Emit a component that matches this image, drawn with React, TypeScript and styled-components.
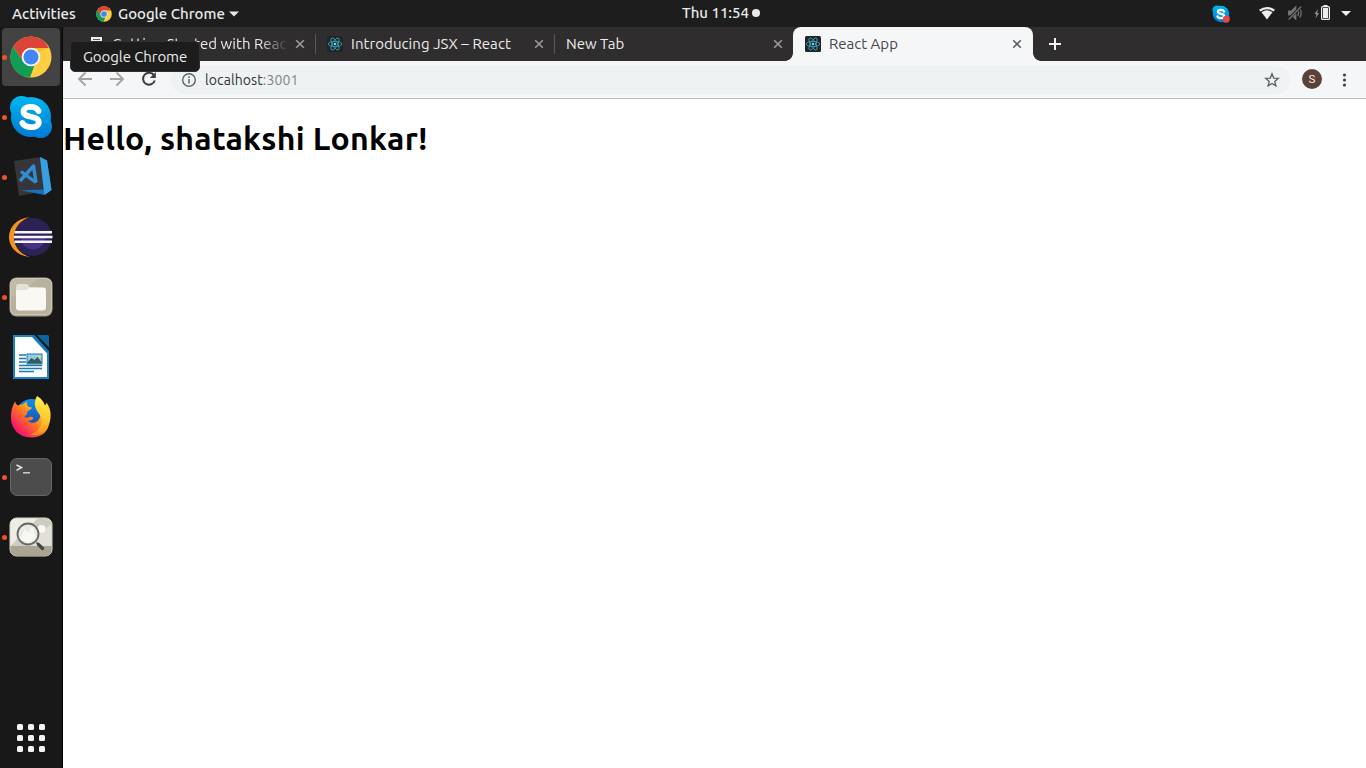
import React from 'react';
import styled, { createGlobalStyle } from 'styled-components';

const GlobalStyle = createGlobalStyle`
  * { box-sizing: border-box; }
  body { margin: 0; overflow: hidden; background: #fff; font-family: Ubuntu, "Noto Sans", sans-serif; }
  svg { display: block; flex: none; }
`;

const Desktop = styled.div`
  width: 1366px;
  height: 768px;
  display: flex;
  flex-direction: column;
`;

const Label = styled.span<{ $size?: number; $track?: number; $color?: string; $weight?: number }>`
  font-size: ${p => p.$size ?? 15}px;
  letter-spacing: ${p => p.$track ?? 0}px;
  color: ${p => p.$color ?? '#ececec'};
  font-weight: ${p => p.$weight ?? 400};
  white-space: nowrap;
  line-height: 20px;
`;

const TopBar = styled.header`
  height: 27px;
  flex: none;
  background: #1d1d1d;
  display: grid;
  grid-template-columns: 682px 1fr 154px;
  align-items: center;
`;

const TopLeft = styled.div`
  display: flex;
  align-items: center;
  padding-left: 12px;
`;

const Activities = styled.div`
  width: 84px;
  display: flex;
`;

const AppName = styled.div`
  display: flex;
  width: 111px;
  margin-left: 6px;
`;

const Clock = styled.div`
  display: flex;
  align-items: center;
  padding-bottom: 1px;
`;

const ClockText = styled.div`
  display: flex;
  width: 70px;
`;

const ClockDot = styled.i`
  width: 8px;
  height: 8px;
  border-radius: 50%;
  background: #e8e8e8;
`;

const Tray = styled.div`
  display: flex;
  align-items: center;
  height: 27px;
`;

const Body = styled.div`
  flex: 1;
  display: flex;
  min-height: 0;
`;

const Dock = styled.nav`
  width: 63px;
  background: #181818;
  border-right: 1px solid #040404;
  display: flex;
  flex-direction: column;
  gap: 2px;
  padding: 1px 0 0 2px;
`;

const DockItem = styled.div<{ $active?: boolean }>`
  width: 58px;
  height: 58px;
  border-radius: 4px;
  background: ${p => (p.$active ? '#434343' : 'transparent')};
  display: flex;
  align-items: center;
`;

const RunDot = styled.i<{ $on?: boolean }>`
  width: 5px;
  height: 5px;
  border-radius: 50%;
  background: ${p => (p.$on ? '#f05423' : 'transparent')};
  margin: 0 2px 0 0;
`;

const AppsButton = styled.div`
  margin: auto 0 16px 15px;
  display: grid;
  grid-template-columns: repeat(3, 6px);
  gap: 5px;
`;

const AppsDot = styled.i`
  height: 6px;
  border-radius: 1.5px;
  background: #f4f4f4;
`;

const Browser = styled.main`
  flex: 1;
  display: flex;
  flex-direction: column;
  background: #fff;
`;

const TabStrip = styled.div`
  height: 34px;
  background: #302d2e;
  display: flex;
  align-items: center;
`;

const Tab = styled.div<{ $width: number; $pad: number; $divider?: boolean }>`
  width: ${p => p.$width}px;
  height: 20px;
  padding: 0 10px 0 ${p => p.$pad}px;
  border-right: ${p => (p.$divider ? '1px solid #5a5758' : '0')};
  display: flex;
  align-items: center;
  gap: 8px;
`;

const ActiveTab = styled.div`
  position: relative;
  width: 240px;
  height: 34px;
  padding: 0 11px 0 12px;
  border-radius: 8px 8px 0 0;
  background: #f5f6f8;
  display: flex;
  align-items: center;
  gap: 8px;
  &::before, &::after {
    content: '';
    position: absolute;
    bottom: 0;
    width: 8px;
    height: 8px;
  }
  &::before { left: -8px; background: radial-gradient(circle at 0 0, transparent 7.5px, #f5f6f8 8.2px); }
  &::after { right: -8px; background: radial-gradient(circle at 100% 0, transparent 7.5px, #f5f6f8 8.2px); }
`;

const TabTitle = styled.div<{ $fade?: boolean }>`
  flex: 1;
  min-width: 0;
  display: flex;
  overflow: hidden;
  mask-image: ${p => (p.$fade ? 'linear-gradient(to right, #000 148px, transparent 176px)' : 'none')};
`;

const NewTab = styled.div`
  margin-left: 16px;
`;

const Toolbar = styled.div`
  height: 38px;
  background: #f5f6f8;
  border-bottom: 1px solid #bcc3cd;
  display: flex;
  align-items: center;
  padding: 0 14px 0 14px;
`;

const NavButtons = styled.div`
  display: flex;
  gap: 16px;
  padding-bottom: 1px;
`;

const Omnibox = styled.div`
  height: 28px;
  width: 1119px;
  margin-left: 14px;
  border-radius: 14px;
  background: #eef2f3;
  display: flex;
  align-items: center;
  padding: 0 10px 0 10px;
`;

const Url = styled.div`
  flex: 1;
  display: flex;
  margin-left: 8px;
`;

const Avatar = styled.div`
  width: 20px;
  height: 20px;
  margin: 0 0 1px 12px;
  border-radius: 50%;
  background: #5d4037;
  color: #eee;
  font: 11.5px/21px Roboto, sans-serif;
  text-align: center;
`;

const Menu = styled.div`
  margin-left: auto;
`;

const Heading = styled.h1`
  margin: 21px 0 0;
  font-size: 32px;
  line-height: 37px;
  letter-spacing: 0.27px;
  font-weight: 700;
  color: #000;
  white-space: nowrap;
`;

const Tooltip = styled.div`
  position: absolute;
  left: 70px;
  top: 41px;
  width: 130px;
  height: 31px;
  padding-left: 12px;
  border: 1px solid #303030;
  border-radius: 5px;
  background: #1c1c1c;
  display: flex;
  align-items: center;
`;

const ChromeLogo = ({ size }: { size: number }) => (
  <svg width={size} height={size} viewBox="0 0 42 42">
    <circle cx="21" cy="21" r="20.5" fill="#ffcd40" />
    <path d="M21 .5A20.500 20.500 0 0 1 38.800 12H21a9 9 0 0 0-7.800 13.500L3.200 10.800A20.500 20.500 0 0 1 21 .5Z" fill="#db4437" />
    <path d="M3.200 10.800 13.200 25.500A9 9 0 0 0 24.500 29.300L20 41.500A20.500 20.500 0 0 1 3.200 10.800Z" fill="#0f9d58" />
    <path d="M21 12h17.800l-10 4.500Z" fill="#e9b52b" opacity=".6" />
    <circle cx="21" cy="21" r="9.300" fill="#f4f4f4" />
    <circle cx="21" cy="21" r="7.500" fill="#4285f4" />
  </svg>
);

const SkypeLogo = ({ size, badge }: { size: number; badge?: boolean }) => (
  <svg width={size} height={size} viewBox="0 0 44 44">
    <defs>
      <linearGradient id="skype" gradientUnits="userSpaceOnUse" x1="0" y1="1" x2="0" y2="43">
        <stop offset="0" stopColor="#00b7f0" />
        <stop offset="1" stopColor="#0078d7" />
      </linearGradient>
    </defs>
    <g fill="url(#skype)">
      <circle cx="22" cy="22" r="20" />
      <circle cx="12.500" cy="12.500" r="11.500" />
      <circle cx="31.500" cy="31.500" r="11.500" />
    </g>
    <path d="M29.500 16C27 10.500 14.500 10.500 14.500 16.500 14.500 23.500 29.800 20 29.800 27.200c0 6.800-14 6-16.300.8" fill="none" stroke="#fff" strokeWidth="5.800" strokeLinecap="round" />
    {badge && <circle cx="35" cy="35" r="8.500" fill="#e8453c" />}
  </svg>
);

const CodeLogo = () => (
  <svg width="44" height="44" viewBox="0 0 44 44">
    <path d="m5 6 27-4 3 34-25 5Z" fill="#36363a" />
    <path d="m31 2 7 3.500 4.500 29.500-7 5-24-4.700 23-.8Z" fill="#1672b8" />
    <path d="m31 2 7 3.500 4.500 29.500-7 5Z" fill="#3a9fe0" />
    <path d="m12 16.500 15 11M11 26l13.500-15 2.500 16.500" fill="none" stroke="#2e8ed1" strokeWidth="3.400" strokeLinejoin="round" />
  </svg>
);

const EclipseLogo = () => (
  <svg width="44" height="44" viewBox="0 0 44 44">
    <path d="M21 2C-7 5-7 39 21 42 0 36 0 9 21 2Z" fill="#f7941e" />
    <circle cx="24" cy="22" r="19" fill="#2c2255" />
    <path d="M11.500 22a12.500 12.500 0 0 0 25 0Z" fill="#423389" />
    <path d="M5.500 17.300h37.500M5 22h38.500M5.500 26.700h37.500" stroke="#f6f5fa" strokeWidth="2.400" />
  </svg>
);

const FilesLogo = () => (
  <svg width="44" height="44" viewBox="0 0 44 44">
    <rect x=".5" y="2.500" width="43" height="39" rx="7" fill="#aaa593" />
    <rect x="1.500" y="3.500" width="41" height="36" rx="6" fill="#b7b19e" stroke="#cbc6b5" />
    <path d="M2 22C18 20 19 8 30 4h-22Q2 4 2 10Z" fill="#c0baa8" />
    <path d="M7 12q0-3 3-3h8l3 3.500h8v8H7Z" fill="#e5e1d7" />
    <path d="M7 16.500q0-1.500 2-1.500h9l3-2.500h13q3 0 3 3v17q0 3-3 3H10q-3 0-3-3Z" fill="#f9f8f5" />
  </svg>
);

const WriterLogo = () => (
  <svg width="44" height="44" viewBox="0 0 44 44">
    <path d="M5 1h18.500L39 18v25H5Z" fill="#fff" stroke="#1a83ca" strokeWidth="2" />
    <path d="M24 0h4.500L40 12.500V18Z" fill="#181818" />
    <path d="M22.500 0 40 19v-3L25.500 0Z" fill="#0f76bb" />
    <path d="M28 0h10.500q1.500 0 1.500 1.500V12.500Z" fill="#0d64a3" />
    <path d="M10 20h7M10 23.500h7M10 27h7M10 30.500h23M10 33.500h23M10 36.500h15" stroke="#1c79b5" strokeWidth="1.400" />
    <rect x="18" y="19" width="15" height="10" fill="#8fcdf0" stroke="#1c79b5" />
    <path d="m18.500 27 4-4 3 2 3-3 4 5v1.500h-14Z" fill="#375c52" />
    <circle cx="30.500" cy="21.500" r="1.300" fill="#f5e32b" />
  </svg>
);

const FirefoxLogo = () => (
  <svg width="44" height="44" viewBox="0 0 44 44">
    <defs>
      <linearGradient id="fox" x1=".9" y1=".1" x2=".15" y2=".8">
        <stop offset="0" stopColor="#fff44f" />
        <stop offset=".3" stopColor="#ffb81d" />
        <stop offset=".6" stopColor="#ff6a2a" />
        <stop offset="1" stopColor="#f5156c" />
      </linearGradient>
      <linearGradient id="globe" x1="0" y1="0" x2="0" y2="1">
        <stop offset="0" stopColor="#0a90f0" />
        <stop offset="1" stopColor="#283c9b" />
      </linearGradient>
      <linearGradient id="flame" x1=".5" y1="0" x2=".4" y2="1">
        <stop offset="0" stopColor="#fff04a" />
        <stop offset=".6" stopColor="#ffc629" />
        <stop offset="1" stopColor="#ff8a1e" />
      </linearGradient>
    </defs>
    <circle cx="22.500" cy="19.500" r="15.500" fill="url(#globe)" />
    <path d="M6 6.500c.5 2 1.500 3 3 4 1.500-1 3-1.200 4.500-1 1.500-1 2.500-2 4.500-3-.5 3 .5 4.500 2 5.500l3 .5c-.5 2.500-4.500 2.500-5 5 .8 2-1.500 2.500-2.500 4.500 4 2 5.500-1.500 8.500.5 1 1-1.500 3-5.500 3.500 6 4 12 1 13-6l9 3C41 38 31 42.500 22 42.500 10 42.500 2.500 34 2 24 1.500 17 3 12 6 6.500Z" fill="url(#fox)" />
    <path d="M28 1c4.500 2.500 7 6 8 9.500 1-1 1.500-2 1.500-3C43 15 43 25 38 33c-5 7-12 8-16.500 6.500C31 36 34.500 28 32.500 22c-4-5-7.500-10-6.500-15C26.500 4 27 2.500 28 1Z" fill="url(#flame)" />
  </svg>
);

const TerminalLogo = () => (
  <svg width="44" height="44" viewBox="0 0 44 44">
    <rect x="1.500" y="3.500" width="41" height="37" rx="6.500" fill="#4c4c4c" stroke="#666" />
    <path d="m7.500 10 5 2.500-5 2.800" fill="none" stroke="#e4e4e4" strokeWidth="1.500" />
    <path d="M14 17.800h7" stroke="#e4e4e4" strokeWidth="1.300" />
  </svg>
);

const ViewerLogo = () => (
  <svg width="44" height="44" viewBox="0 0 44 44">
    <rect x="1" y="3" width="42" height="38" rx="6.500" fill="#cfccc0" stroke="#d9d7ce" />
    <path d="m1.500 31 27-27.500H8q-6.500 0-6.500 6.500Z" fill="#edece5" />
    <path d="m17 31 25-22v22Z" fill="#e2dfd6" />
    <path d="M1.500 31h41v4q0 6-6.500 6H8q-6.500 0-6.500-6Z" fill="#aaa592" />
    <circle cx="32.500" cy="14" r="4" fill="#f8f8f5" />
    <circle cx="19" cy="19" r="10.500" fill="#eaeae5" stroke="#666" strokeWidth="1.800" />
    <path d="m11 24 5-10 3 4 4-7 4 12-8 5Z" fill="#fff" opacity=".6" />
    <path d="m27.500 27.500 2 2" stroke="#666" strokeWidth="2" />
    <path d="m29.500 29.500 4 4" stroke="#444" strokeWidth="3.200" strokeLinecap="round" />
  </svg>
);

const ReactIcon = () => (
  <svg width="16" height="16" viewBox="0 0 16 16">
    <rect width="16" height="16" rx="1.500" fill="#222526" />
    <g fill="none" stroke="#3fa9c2" strokeWidth=".8">
      <ellipse cx="8" cy="8" rx="6.800" ry="2.600" />
      <ellipse cx="8" cy="8" rx="6.800" ry="2.600" transform="rotate(60 8 8)" />
      <ellipse cx="8" cy="8" rx="6.800" ry="2.600" transform="rotate(120 8 8)" />
    </g>
    <circle cx="8" cy="8" r="1.300" fill="#61dafb" />
  </svg>
);

const PageIcon = () => (
  <svg width="14" height="16" viewBox="0 0 14 16">
    <rect x="1" y="1" width="11" height="13" fill="#f0f0f0" />
    <path d="M3 3.500h7M3 6h7" stroke="#4a596b" strokeWidth="1" />
  </svg>
);

const CloseIcon = ({ color }: { color: string }) => (
  <svg width="10" height="10" viewBox="0 0 10 10">
    <path d="m1.200 1.200 7.600 7.600M8.800 1.200 1.200 8.800" stroke={color} strokeWidth="1.600" />
  </svg>
);

const Caret = ({ width }: { width: number }) => (
  <svg width={width} height="6" viewBox="0 0 10 6">
    <path d="M0 .5h10L5 5.500Z" fill="#e8e8e8" />
  </svg>
);

const ArrowIcon = ({ flip }: { flip?: boolean }) => (
  <svg width="16" height="16" viewBox="0 0 16 16">
    <path d="M15 8H2M8.500 1.500 2 8l6.500 6.500" transform={flip ? 'rotate(180 8 8)' : undefined} fill="none" stroke="#a2a4a6" strokeWidth="1.900" />
  </svg>
);

const ReloadIcon = () => (
  <svg width="16" height="16" viewBox="0 0 16 16">
    <path d="M13 4.200A6 6 0 1 0 13.800 9.500" fill="none" stroke="#3b3d40" strokeWidth="2" />
    <path d="M14.800 1v6h-6Z" fill="#3b3d40" />
  </svg>
);

const InfoIcon = () => (
  <svg width="16" height="16" viewBox="0 0 16 16">
    <circle cx="8" cy="8" r="6.300" fill="none" stroke="#5f6368" strokeWidth="1.400" />
    <path d="M8 7v4.500M8 4.300v1.600" stroke="#5f6368" strokeWidth="1.500" />
  </svg>
);

const StarIcon = () => (
  <svg width="16" height="16" viewBox="0 0 16 16">
    <path d="m8 1.800 1.700 4.300 4.600.3-3.500 3 1.100 4.500L8 11.500l-3.900 2.400 1.100-4.500-3.500-3 4.600-.3Z" fill="none" stroke="#5a5d62" strokeWidth="1.300" />
  </svg>
);

const PlusIcon = () => (
  <svg width="12" height="12" viewBox="0 0 12 12">
    <path d="M6 0v12M0 6h12" stroke="#f4f4f4" strokeWidth="2" />
  </svg>
);

const DotsIcon = () => (
  <svg width="16" height="16" viewBox="0 0 16 16">
    <g fill="#3f4246">
      <circle cx="8.500" cy="3" r="1.600" />
      <circle cx="8.500" cy="8" r="1.600" />
      <circle cx="8.500" cy="13" r="1.600" />
    </g>
  </svg>
);

const StatusIcons = () => (
  <svg width="96" height="27" viewBox="0 0 96 27">
    <path d="M1 9.800Q9 4 17 9.800l-1.500 1.600Q9 7.200 2.500 11.400Z" fill="#eee" />
    <path d="M3.500 12.200Q9 8.500 14.500 12.200L9 19.500Z" fill="#eee" />
    <g stroke="#777" fill="none" strokeWidth="1.200" transform="translate(.7 0)">
      <path d="M30 11h3l4-4v12l-4-4h-3Z" fill="#777" />
      <path d="M39 10q2 3 0 6M41 8.500q3 4.500 0 9" />
      <path d="m30 19 12-12" stroke="#1d1d1d" strokeWidth="3" />
      <path d="m30 19.500 12.500-13" />
    </g>
    <path d="m60 9-3.500 5h2l-1 4.500 3.500-5.500h-2Z" fill="#999" />
    <path d="M65.500 5h4v2h-4z" fill="#eee" />
    <rect x="63.600" y="6.600" width="7.800" height="12.800" rx="1" fill="none" stroke="#eee" strokeWidth="1.200" />
    <path d="M65 8h5v10h-5z" fill="#eee" />
    <path d="M83 11h10l-5 5Z" fill="#eee" />
  </svg>
);

const dockApps = [
  { name: 'chrome', icon: <ChromeLogo size={42} />, running: true, active: true },
  { name: 'skype', icon: <SkypeLogo size={44} />, running: true },
  { name: 'code', icon: <CodeLogo />, running: true },
  { name: 'eclipse', icon: <EclipseLogo /> },
  { name: 'files', icon: <FilesLogo />, running: true },
  { name: 'writer', icon: <WriterLogo /> },
  { name: 'firefox', icon: <FirefoxLogo /> },
  { name: 'terminal', icon: <TerminalLogo />, running: true },
  { name: 'viewer', icon: <ViewerLogo />, running: true },
];

const DockIcon = styled.div`
  width: 44px;
  display: flex;
  justify-content: center;
`;

const TraySkype = styled.div`
  width: 46px;
`;

export default function App() {
  return (
    <Desktop>
      <GlobalStyle />
      <TopBar>
        <TopLeft>
          <Activities><Label $weight={500}>Activities</Label></Activities>
          <ChromeLogo size={16} />
          <AppName><Label $weight={500}>Google Chrome</Label></AppName>
          <Caret width={10} />
        </TopLeft>
        <Clock>
          <ClockText><Label $weight={500}>Thu 11:54</Label></ClockText>
          <ClockDot />
        </Clock>
        <Tray>
          <TraySkype><SkypeLogo size={18} badge /></TraySkype>
          <StatusIcons />
        </Tray>
      </TopBar>
      <Body>
        <Dock>
          {dockApps.map(app => (
            <DockItem key={app.name} $active={app.active}>
              <RunDot $on={app.running} />
              <DockIcon>{app.icon}</DockIcon>
            </DockItem>
          ))}
          <AppsButton>
            {Array.from({ length: 9 }, (_, i) => <AppsDot key={i} />)}
          </AppsButton>
        </Dock>
        <Browser>
          <TabStrip>
            <Tab $width={253} $pad={27} $divider>
              <PageIcon />
              <TabTitle $fade><Label $track={0.05}>Getting Started with React</Label></TabTitle>
              <CloseIcon color="#9c9a9b" />
            </Tab>
            <Tab $width={239} $pad={11} $divider>
              <ReactIcon />
              <TabTitle><Label $track={0.07}>Introducing JSX – React</Label></TabTitle>
              <CloseIcon color="#9c9a9b" />
            </Tab>
            <Tab $width={238} $pad={11}>
              <TabTitle><Label>New Tab</Label></TabTitle>
              <CloseIcon color="#9c9a9b" />
            </Tab>
            <ActiveTab>
              <ReactIcon />
              <TabTitle><Label $color="#45474a">React App</Label></TabTitle>
              <CloseIcon color="#5f6165" />
            </ActiveTab>
            <NewTab><PlusIcon /></NewTab>
          </TabStrip>
          <Toolbar>
            <NavButtons>
              <ArrowIcon />
              <ArrowIcon flip />
              <ReloadIcon />
            </NavButtons>
            <Omnibox>
              <InfoIcon />
              <Url>
                <Label $size={14} $track={0.1} $color="#303236">localhost</Label>
                <Label $size={14} $track={0.1} $color="#808388">:3001</Label>
              </Url>
              <StarIcon />
            </Omnibox>
            <Avatar>S</Avatar>
            <Menu><DotsIcon /></Menu>
          </Toolbar>
          <Heading>Hello, shatakshi Lonkar!</Heading>
        </Browser>
      </Body>
      <Tooltip><Label $track={-0.08}>Google Chrome</Label></Tooltip>
    </Desktop>
  );
}
